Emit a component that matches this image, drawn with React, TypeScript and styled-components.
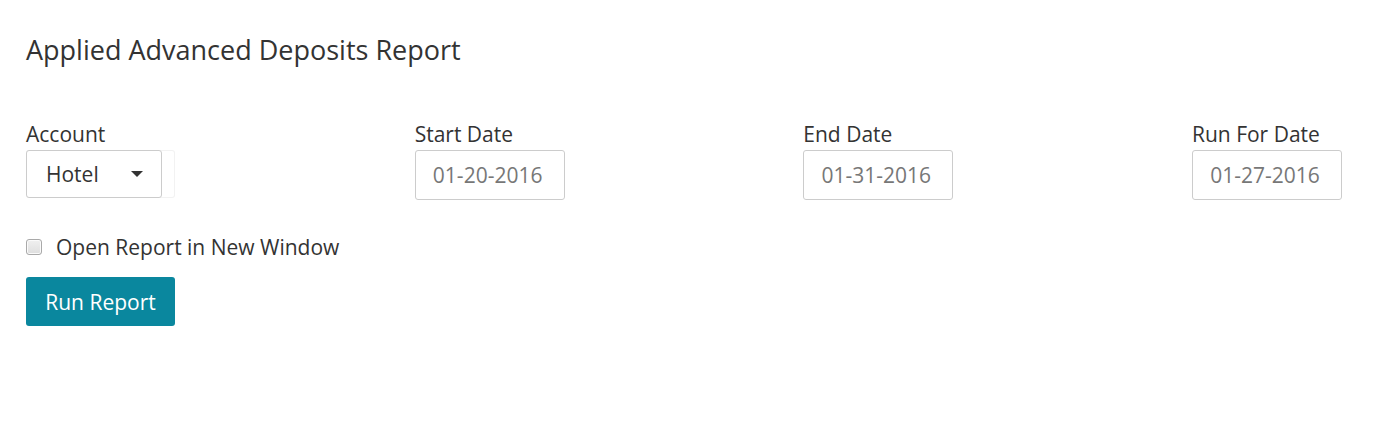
import React, { useState } from 'react';
import styled, { createGlobalStyle } from 'styled-components';

const GlobalStyle = createGlobalStyle`
  body {
    margin: 0;
    background: #fff;
    font-family: "Open Sans", "Noto Sans", sans-serif;
    color: #333;
  }
`;

const Page = styled.div`
  padding: 30px 26px 0 26px;
`;

const Title = styled.h1`
  margin: 0;
  font-size: 27px;
  font-weight: 400;
  line-height: 40px;
  color: #333;
`;

const FieldRow = styled.div`
  display: grid;
  grid-template-columns: repeat(3, 388.67px) 1fr;
  margin-top: 52px;
`;

const Field = styled.div`
  display: flex;
  flex-direction: column;
  align-items: flex-start;
`;

const Label = styled.label`
  font-size: 21px;
  line-height: 24px;
  color: #333;
  margin-bottom: 4px;
`;

const SelectWrap = styled.div`
  position: relative;
  display: flex;
  width: 149px;
  height: 48px;
  border: 1px solid #f2f2f2;
  border-left: none;
  border-radius: 3px;
  box-sizing: border-box;
`;

const SelectBox = styled.div`
  display: flex;
  align-items: center;
  justify-content: space-between;
  width: 136px;
  height: 48px;
  box-sizing: border-box;
  margin-top: -1px;
  padding: 0 18px 0 19px;
  border: 1px solid #ccc;
  border-radius: 3px;
  background: #fff;
  font-size: 21px;
  color: #333;
  cursor: pointer;
`;

const Caret = styled.span`
  width: 0;
  height: 0;
  border-left: 6px solid transparent;
  border-right: 6px solid transparent;
  border-top: 6px solid #333;
`;

const DateInput = styled.input`
  width: 150px;
  height: 50px;
  box-sizing: border-box;
  border: 1px solid #ccc;
  border-radius: 3px;
  padding: 0 12px 0 8px;
  font-family: inherit;
  font-size: 21px;
  color: #777;
  text-align: center;
  outline: none;
`;

const CheckRow = styled.label`
  display: flex;
  align-items: center;
  gap: 14px;
  margin-top: 35px;
  font-size: 21px;
  line-height: 24px;
  color: #333;
  cursor: pointer;
`;

const Check = styled.input`
  appearance: none;
  width: 16px;
  height: 16px;
  margin: 0;
  border: 1px solid #a9a9a9;
  border-radius: 3px;
  background: linear-gradient(#f0f0f0, #dedede);
  box-shadow: inset 0 0 0 1px #fafafa;

  &:checked {
    background: #0a879e;
    border-color: #0a879e;
  }
`;

const RunButton = styled.button`
  margin-top: 18px;
  width: 149px;
  height: 49px;
  border: none;
  border-radius: 3px;
  background: #0a879e;
  color: #fff;
  font-family: inherit;
  font-size: 21px;
  cursor: pointer;
`;

const dates = [
  { label: 'Start Date', value: '01-20-2016' },
  { label: 'End Date', value: '01-31-2016' },
  { label: 'Run For Date', value: '01-27-2016' },
];

export default function App() {
  const [newWindow, setNewWindow] = useState(false);
  return (
    <Page>
      <GlobalStyle />
      <Title>Applied Advanced Deposits Report</Title>
      <FieldRow>
        <Field>
          <Label>Account</Label>
          <SelectWrap>
            <SelectBox>
              Hotel
              <Caret />
            </SelectBox>
          </SelectWrap>
        </Field>
        {dates.map((d) => (
          <Field key={d.label}>
            <Label>{d.label}</Label>
            <DateInput defaultValue={d.value} />
          </Field>
        ))}
      </FieldRow>
      <CheckRow>
        <Check type="checkbox" checked={newWindow} onChange={() => setNewWindow(!newWindow)} />
        Open Report in New Window
      </CheckRow>
      <RunButton>Run Report</RunButton>
    </Page>
  );
}
